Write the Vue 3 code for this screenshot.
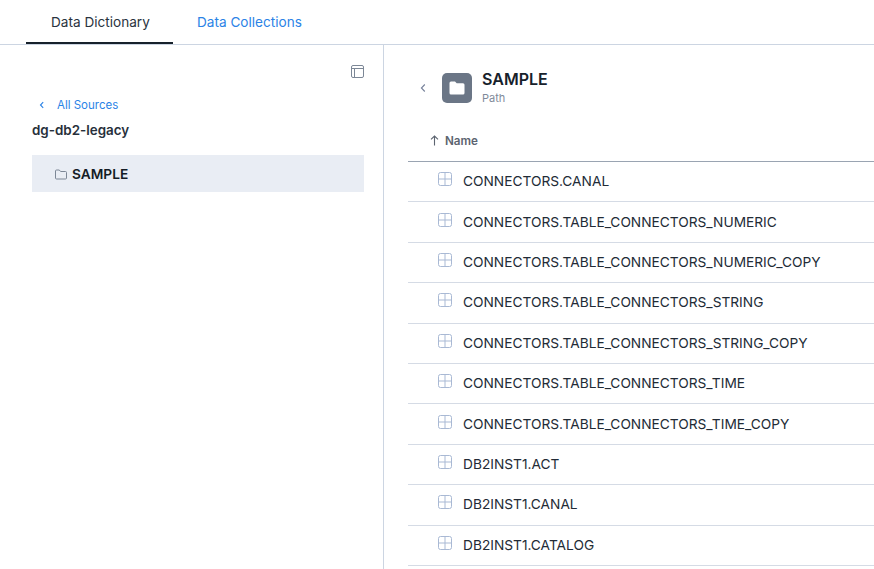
<script setup>
const rows = [
  'CONNECTORS.CANAL',
  'CONNECTORS.TABLE_CONNECTORS_NUMERIC',
  'CONNECTORS.TABLE_CONNECTORS_NUMERIC_COPY',
  'CONNECTORS.TABLE_CONNECTORS_STRING',
  'CONNECTORS.TABLE_CONNECTORS_STRING_COPY',
  'CONNECTORS.TABLE_CONNECTORS_TIME',
  'CONNECTORS.TABLE_CONNECTORS_TIME_COPY',
  'DB2INST1.ACT',
  'DB2INST1.CANAL',
  'DB2INST1.CATALOG'
]
</script>

<template>
  <div class="page">
    <nav class="tabs">
      <a class="tab active">Data Dictionary</a>
      <a class="tab link">Data Collections</a>
    </nav>
    <div class="body">
      <aside class="side">
        <div class="side-tools">
          <svg width="13" height="13" viewBox="0 0 13 13" fill="none" stroke="#7c8796" stroke-width="1">
            <rect x="0.5" y="0.5" width="12" height="12" rx="1.5" />
            <path d="M0.5 3.5H12.5M3.5 3.5V12.5" />
          </svg>
        </div>
        <a class="back">
          <svg width="6" height="8" viewBox="0 0 6 8" fill="none" stroke="#2b83e6" stroke-width="1.1">
            <path d="M4.2 1.2L1.5 4l2.7 2.8" />
          </svg>
          <span>All Sources</span>
        </a>
        <div class="source">dg-db2-legacy</div>
        <div class="tree-item">
          <svg class="tree-ico" width="12" height="11" viewBox="0 0 12 11" fill="none" stroke="#7c8796" stroke-width="1">
            <path d="M0.5 2A1 1 0 0 1 1.5 1H4.3L5.6 2.5H10.5A1 1 0 0 1 11.5 3.5V9A1 1 0 0 1 10.5 10H1.5A1 1 0 0 1 0.5 9Z" />
          </svg>
          <span>SAMPLE</span>
        </div>
      </aside>
      <main class="main">
        <header class="head">
          <svg class="chev" width="6" height="10" viewBox="0 0 6 10" fill="none" stroke="#76819a" stroke-width="1.1">
            <path d="M4.8 1.5L1.4 5l3.4 3.5" />
          </svg>
          <div class="badge">
            <svg width="16" height="14" viewBox="0 0 16 14" fill="#fff">
              <path d="M0.5 2A1.5 1.5 0 0 1 2 0.5H6L7.7 2.3H14A1.5 1.5 0 0 1 15.5 3.8V12A1.5 1.5 0 0 1 14 13.5H2A1.5 1.5 0 0 1 0.5 12Z" />
            </svg>
          </div>
          <div class="titles">
            <div class="title">SAMPLE</div>
            <div class="sub">Path</div>
          </div>
        </header>
        <div class="col-head">
          <svg width="9" height="11" viewBox="0 0 9 11" fill="none" stroke="#5c6470" stroke-width="1.1">
            <path d="M4.5 10.5V1M1 4.3L4.5 1 8 4.3" />
          </svg>
          <span>Name</span>
        </div>
        <div class="row" v-for="r in rows" :key="r">
          <svg class="grid-ico" width="14" height="14" viewBox="0 0 14 14" fill="none" stroke="#a9b9d4" stroke-width="1">
            <rect x="0.5" y="0.5" width="13" height="13" rx="2" />
            <path d="M0.5 7H13.5M7 0.5V13.5" />
          </svg>
          <span>{{ r }}</span>
        </div>
      </main>
    </div>
  </div>
</template>

<style scoped>
.page {
  width: 874px;
  height: 569px;
  overflow: hidden;
  background: #fff;
  font-family: Inter, "Noto Sans", sans-serif;
  color: #1b2530;
  display: flex;
  flex-direction: column;
}
.tabs {
  height: 45px;
  box-sizing: border-box;
  border-bottom: 1px solid #ccd5e2;
  display: flex;
  padding-left: 26px;
}
.tab {
  height: 44px;
  box-sizing: border-box;
  padding: 14px 24px 0 25px;
  font-size: 13.6px;
  line-height: 17px;
  white-space: nowrap;
}
.active {
  width: 147px;
  border-bottom: 2px solid #17212b;
  color: #2a3340;
}
.link {
  color: #2b83e6;
  padding-left: 24px;
}
.body {
  flex: 1;
  display: flex;
  min-height: 0;
}
.side {
  width: 384px;
  box-sizing: border-box;
  border-right: 1px solid #ccd5e2;
  padding: 20px 19px 0 32px;
}
.side-tools {
  display: flex;
  justify-content: flex-end;
  height: 14px;
}
.back {
  margin-top: 18px;
  display: flex;
  align-items: center;
  gap: 12px;
  padding-left: 7px;
  color: #2b83e6;
  font-size: 11.5px;
  line-height: 16px;
}
.source {
  margin-top: 8px;
  font-size: 13.4px;
  font-weight: 600;
  line-height: 18px;
  color: #27303b;
}
.tree-item {
  margin-top: 16px;
  height: 37px;
  background: #e9edf4;
  display: flex;
  align-items: center;
  gap: 5px;
  padding-left: 23px;
  font-size: 13.7px;
  font-weight: 600;
  color: #141c26;
}
.tree-ico {
  margin-top: 2px;
}
.main {
  flex: 1;
  min-width: 0;
  padding-left: 24px;
}
.head {
  height: 72px;
  box-sizing: border-box;
  padding: 28px 0 0 12px;
  display: flex;
  align-items: flex-start;
}
.chev {
  margin-top: 10px;
}
.badge {
  margin-left: 16px;
  width: 30px;
  height: 30px;
  border-radius: 5px;
  background: #6b7686;
  display: flex;
  align-items: center;
  justify-content: center;
}
.titles {
  margin-left: 10px;
  margin-top: -5px;
}
.title {
  font-size: 16px;
  font-weight: 600;
  line-height: 22px;
  color: #17212b;
}
.sub {
  font-size: 11px;
  line-height: 17px;
  color: #7f8a99;
}
.col-head {
  height: 45px;
  box-sizing: border-box;
  border-bottom: 1px solid #9aa4b2;
  display: flex;
  align-items: center;
  gap: 6px;
  padding: 3px 0 0 22px;
  font-size: 11.7px;
  font-weight: 600;
  color: #5c6470;
}
.row {
  height: 40.4px;
  box-sizing: border-box;
  border-bottom: 1px solid #d5dbe5;
  display: flex;
  align-items: center;
  padding: 0 0 1px 30px;
  font-size: 13.72px;
  color: #222b36;
  white-space: nowrap;
}
.grid-ico {
  margin: -4px 11px 0 0;
}
</style>
